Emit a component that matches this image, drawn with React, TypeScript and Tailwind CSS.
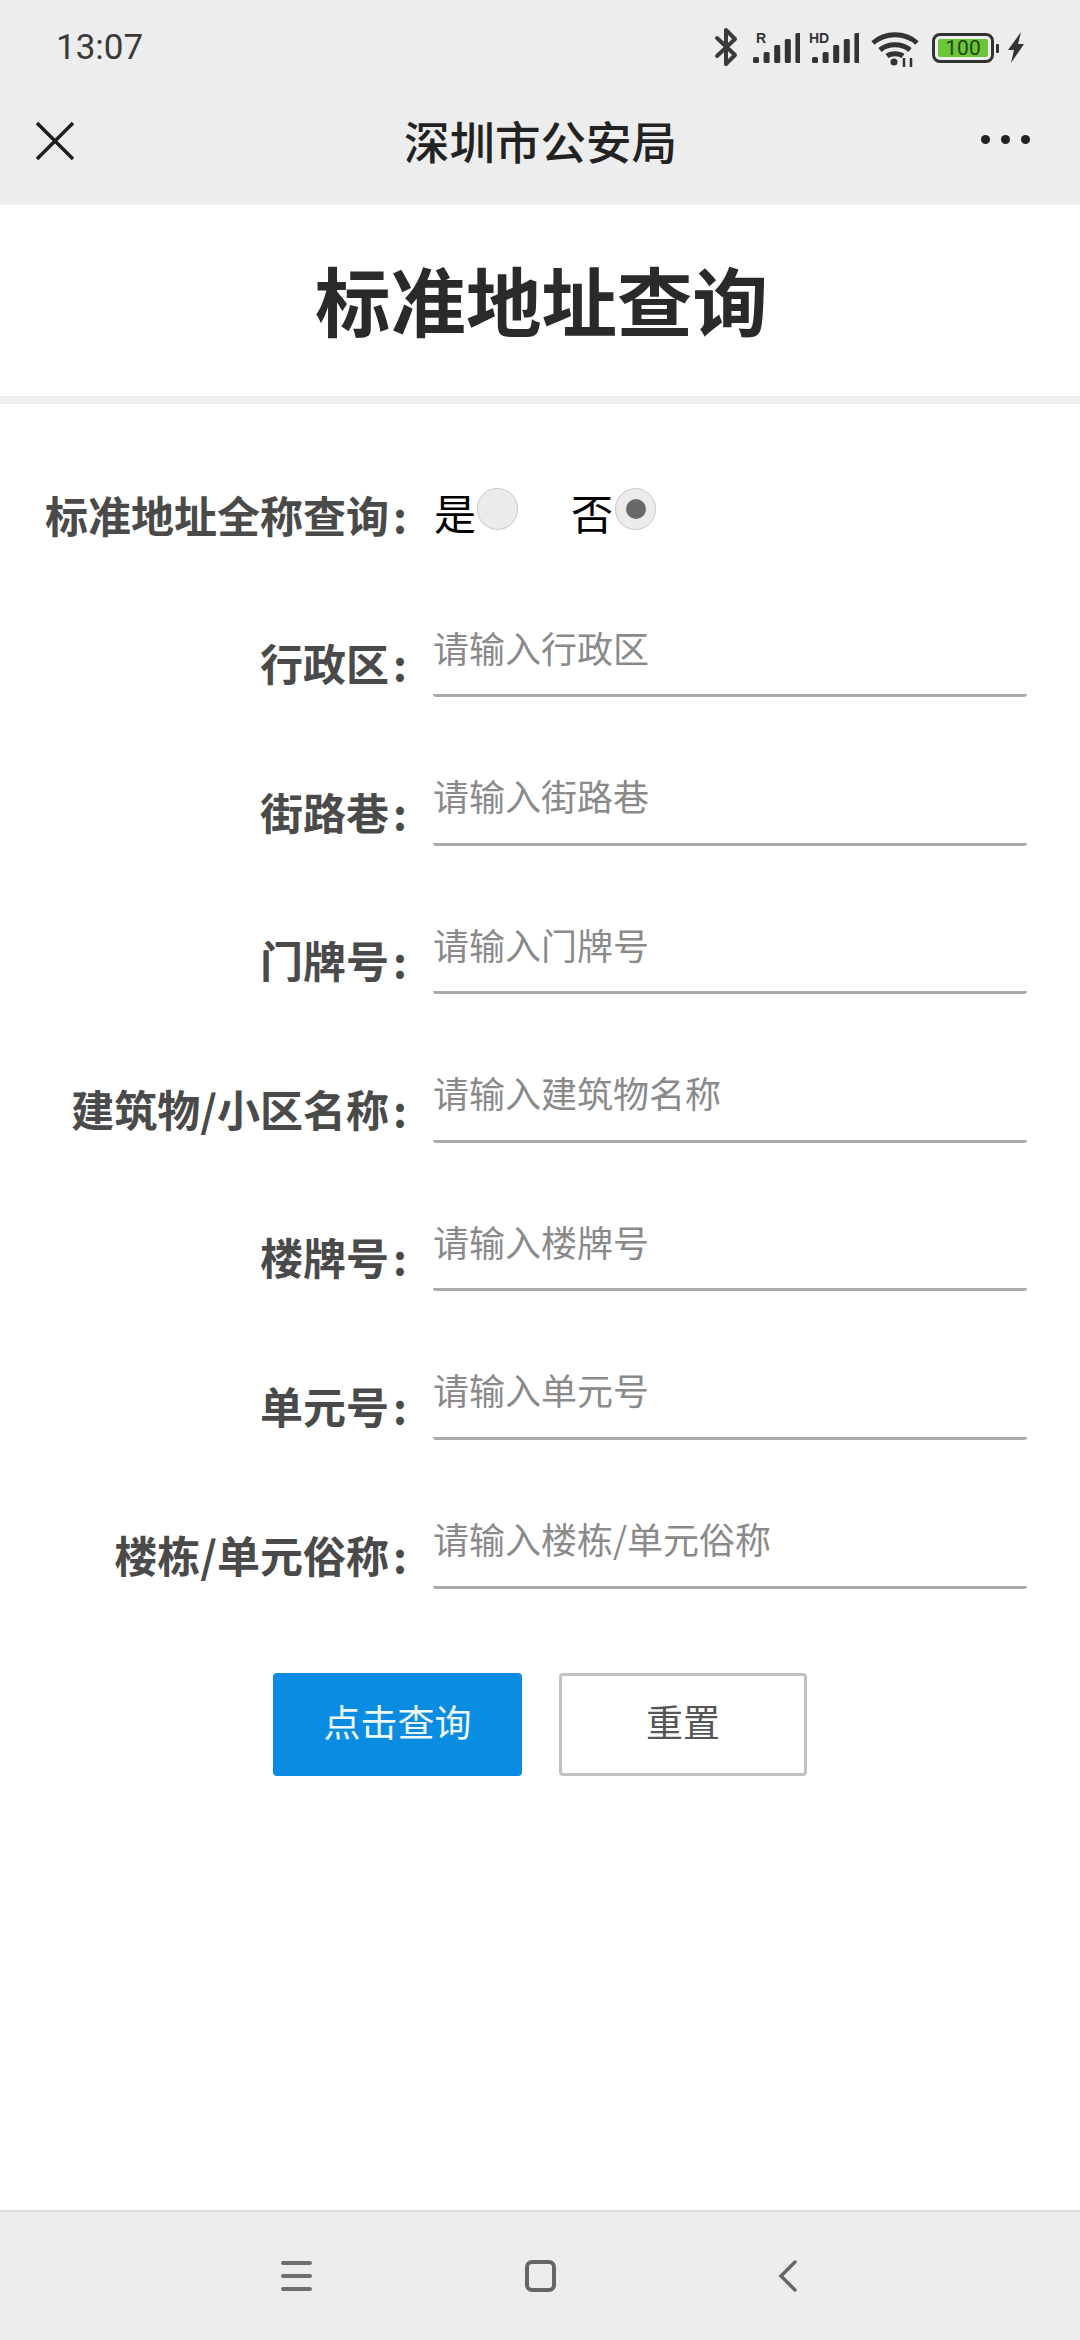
import React from 'react';

const fields = [
  { label: '行政区', placeholder: '请输入行政区' },
  { label: '街路巷', placeholder: '请输入街路巷' },
  { label: '门牌号', placeholder: '请输入门牌号' },
  { label: '建筑物/小区名称', placeholder: '请输入建筑物名称' },
  { label: '楼牌号', placeholder: '请输入楼牌号' },
  { label: '单元号', placeholder: '请输入单元号' },
  { label: '楼栋/单元俗称', placeholder: '请输入楼栋/单元俗称' },
];

const Signal: React.FC<{ tag: string; width: number; tagX: number }> = ({ tag, width, tagX }) => {
  const heights = [6, 11, 18, 24, 30];
  return (
    <svg width={width} height="42" viewBox={`0 -10 ${width} 42`} className="text-[#333333]">
      <text x={tagX} y="11" fontSize="14" fontWeight="700" fill="currentColor" fontFamily="Liberation Sans, sans-serif">
        {tag}
      </text>
      {heights.map((h, i) => (
        <rect key={i} x={width - 47 + i * 10.6} y={31 - h} width="6" height={h} rx="1.5" fill="currentColor" />
      ))}
    </svg>
  );
};

const Radio: React.FC<{ checked?: boolean }> = ({ checked }) => (
  <span className="flex h-[42px] w-[41px] items-center justify-center rounded-full border border-[#c8c8c8] bg-[#ebebeb]">
    {checked && <span className="h-[20px] w-[20px] rounded-full bg-[#696969]" />}
  </span>
);

const App: React.FC = () => {
  return (
    <div className="flex min-h-[2340px] w-[1080px] flex-col bg-white font-['Liberation_Sans','Noto_Sans_CJK_SC',sans-serif]">
      {/* status bar */}
      <div className="flex h-[94px] items-start bg-[#ededed] pl-[56px] pr-[56px] pt-[27px] text-[#3a3a3a]">
        <span className="mt-[1px] font-['Roboto',sans-serif] text-[35px] leading-[40px]">13:07</span>
        <div className="ml-auto flex items-start">
          <svg width="24" height="40" viewBox="0 0 24 40" fill="none" stroke="currentColor" strokeWidth="4" strokeLinejoin="round" strokeLinecap="round">
            <path d="M3 11 L21 28 L12 37 V3 L21 12 L3 29" />
          </svg>
          <div className="ml-[14px] mt-[-5px]">
            <Signal tag="R" width={48} tagX={4} />
          </div>
          <div className="ml-[9px] mt-[-5px]">
            <Signal tag="HD" width={50} tagX={0} />
          </div>
          <svg className="ml-[12px] mt-[4px]" width="48" height="36" viewBox="0 0 48 36" fill="none" stroke="#333333" strokeWidth="5">
            <path d="M2 12 C14 1 34 1 46 12" />
            <path d="M9 19 C17 12 31 12 39 19" />
            <path d="M16 25 C20 22 28 22 32 25" />
            <circle cx="23" cy="31" r="3.5" fill="#333333" stroke="none" />
            <path d="M33 36 V27 M40 36 V27" strokeWidth="2.5" />
          </svg>
          <div className="ml-[13px] mt-[6px] flex items-center">
            <div className="flex h-[30px] w-[62px] items-center rounded-[8px] border-[3px] border-[#333333] p-[3px]">
              <span className="flex h-full w-full items-center justify-center rounded-[2px] bg-[#6cc43a] font-['Roboto',sans-serif] text-[21px] leading-none text-[#1c4a10]">
                100
              </span>
            </div>
            <span className="ml-[2px] h-[9px] w-[3px] rounded-[1px] bg-[#333333]" />
          </div>
          <svg className="ml-[9px] mt-[5px]" width="16" height="31" viewBox="0 0 16 31" fill="#333333">
            <path d="M13 0 L0 18 H6 L3 31 L16 12 H10 Z" />
          </svg>
        </div>
      </div>

      {/* nav bar */}
      <div className="flex h-[111px] items-start bg-[#ededed] pl-[36px] pr-[50px] pt-[28px]">
        <svg width="38" height="38" viewBox="0 0 38 38" fill="none" stroke="#1c1c1c" strokeWidth="3.5">
          <path d="M1 1 L37 37 M37 1 L1 37" />
        </svg>
        <span className="ml-[330px] mt-[-2px] font-['Noto_Sans_CJK_SC',sans-serif] text-[45.5px] font-medium leading-[40px] text-[#222222]">
          深圳市公安局
        </span>
        <div className="ml-auto mt-[13px] flex gap-[11px]">
          <span className="h-[9px] w-[9px] rounded-full bg-[#222222]" />
          <span className="h-[9px] w-[9px] rounded-full bg-[#222222]" />
          <span className="h-[9px] w-[9px] rounded-full bg-[#222222]" />
        </div>
      </div>

      {/* page title */}
      <div className="flex h-[191px] items-center justify-center pl-[3px] pt-[10px]">
        <h1 className="text-[75.5px] font-bold leading-none text-[#2a2a2a]">标准地址查询</h1>
      </div>
      <div className="h-[8px] bg-[#eeeeee]" />

      {/* form */}
      <div className="flex h-[144px] items-start">
        <span className="mt-[82px] w-[407px] text-right font-['Noto_Sans_CJK_SC',sans-serif] text-[43px] font-bold leading-[56px] text-[#4a4a4a]">
          标准地址全称查询<span className="ml-[4px]">:</span>
        </span>
        <div className="ml-[27px] mt-[84px] flex items-start">
          <span className="text-[42px] leading-[56px] text-black">是</span>
          <span className="ml-[1px]">
            <Radio />
          </span>
          <span className="ml-[53px] text-[42px] leading-[56px] text-black">否</span>
          <span className="ml-[2px]">
            <Radio checked />
          </span>
        </div>
      </div>

      {fields.map((f) => (
        <div key={f.label} className="flex h-[148.6px] items-start">
          <label className="mt-[84px] w-[407px] text-right font-['Noto_Sans_CJK_SC',sans-serif] text-[43px] font-bold leading-[60px] text-[#4a4a4a]">
            {f.label}
            <span className="ml-[4px]">:</span>
          </label>
          <input
            readOnly
            placeholder={f.placeholder}
            className="ml-[26px] mt-[57px] h-[92px] w-[594px] rounded-b-[3px] border-b-[3px] border-[#aaaaae] bg-transparent pb-[6px] font-['Noto_Sans_CJK_SC',sans-serif] text-[36px] outline-none placeholder:text-[#8a8a8a]"
          />
        </div>
      ))}

      <div className="mt-[85px] flex justify-center gap-[37px]">
        <button className="h-[103px] w-[249px] rounded-[4px] bg-[#0a8ce2] text-[37px] text-[#eef8ff]">点击查询</button>
        <button className="h-[103px] w-[248px] rounded-[4px] border-[3px] border-[#c2c2c2] bg-white text-[37px] text-[#555555]">
          重置
        </button>
      </div>

      {/* android nav */}
      <div className="mt-auto flex h-[130px] items-start border-t-2 border-[#dcdcdc] bg-[#ededed] pl-[281px] pt-[48px]">
        <div className="mt-[1px] flex w-[31px] flex-col gap-[9px]">
          <span className="h-[4px] rounded-full bg-[#6e6e6e]" />
          <span className="h-[4px] rounded-full bg-[#6e6e6e]" />
          <span className="h-[4px] rounded-full bg-[#6e6e6e]" />
        </div>
        <span className="ml-[213px] h-[32px] w-[31px] rounded-[7px] border-[4px] border-[#666666]" />
        <svg className="ml-[222px]" width="20" height="32" viewBox="0 0 20 32" fill="none" stroke="#666666" strokeWidth="3.5" strokeLinecap="round">
          <path d="M17 2 L3 16 L17 30" />
        </svg>
      </div>
    </div>
  );
};

export default App;
